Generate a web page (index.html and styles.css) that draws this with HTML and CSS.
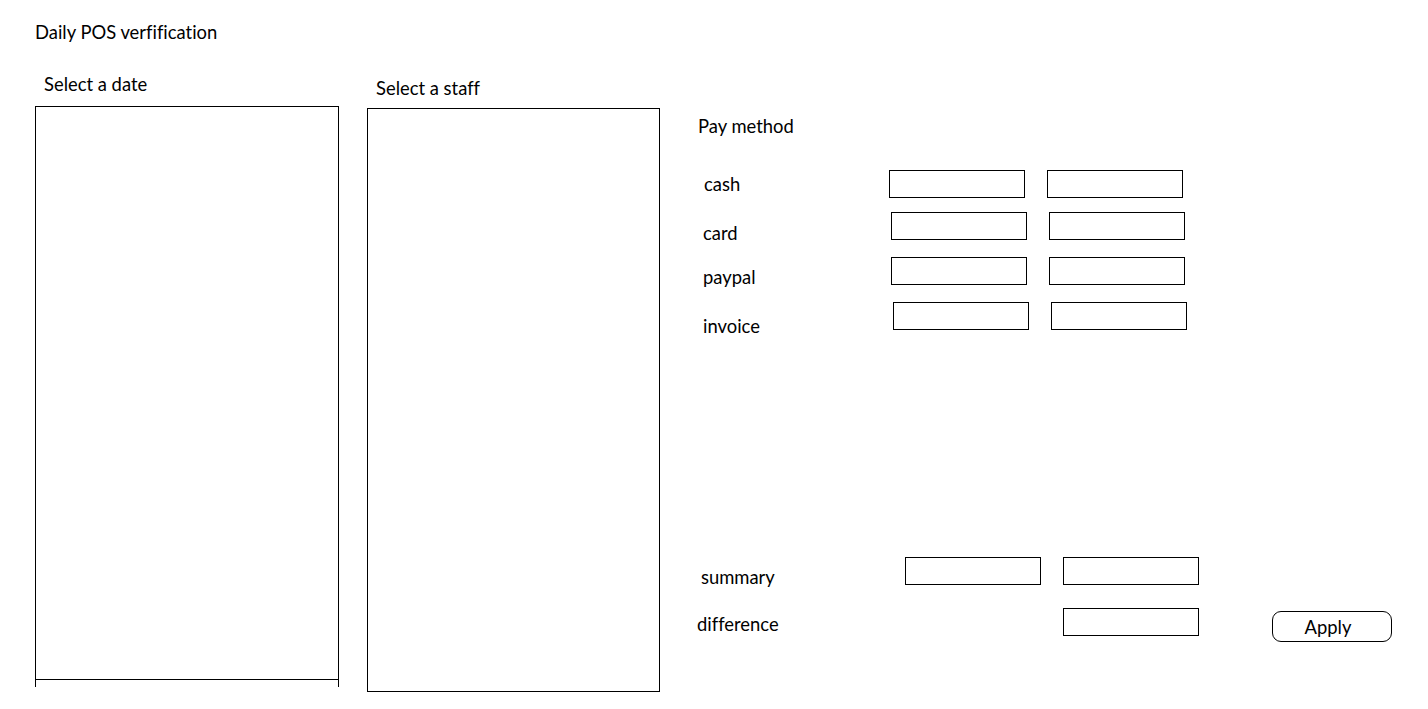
FILE: index.html
```html
<!DOCTYPE html>
<html lang="en">
<head>
    <meta charset="UTF-8">
    <title>Daily POS verfification</title>

    <link rel="stylesheet" href="styles.css">

</head>
<body>

<div class="pos">
    <h1 class="pos-title">Daily POS verfification</h1>

    <div class="pos-main">

        <div class="pos-col pos-col-date">
            <label class="pos-col-label">Select a date</label>
            <div class="pos-list pos-list-date" id="date-list"></div>
            <div class="pos-list-tail"></div>
        </div>

        <div class="pos-col pos-col-staff">
            <label class="pos-col-label">Select a staff</label>
            <div class="pos-list pos-list-staff" id="staff-list"></div>
        </div>

        <div class="pos-pay">
            <div class="pos-pay-title">Pay method</div>

            <div class="pay-row row-cash">
                <span class="pay-label">cash</span>
                <input class="pay-input" type="text"/>
                <input class="pay-input" type="text"/>
            </div>
            <div class="pay-row row-card">
                <span class="pay-label">card</span>
                <input class="pay-input" type="text"/>
                <input class="pay-input" type="text"/>
            </div>
            <div class="pay-row row-paypal">
                <span class="pay-label">paypal</span>
                <input class="pay-input" type="text"/>
                <input class="pay-input" type="text"/>
            </div>
            <div class="pay-row row-invoice">
                <span class="pay-label">invoice</span>
                <input class="pay-input" type="text"/>
                <input class="pay-input" type="text"/>
            </div>

            <div class="pay-row row-summary">
                <span class="pay-label">summary</span>
                <input class="pay-input" type="text"/>
                <input class="pay-input" type="text"/>
            </div>
            <div class="pay-row row-difference">
                <span class="pay-label">difference</span>
                <input class="pay-input" type="text"/>
                <button class="pay-apply" id="apply-button">Apply</button>
            </div>
        </div>

    </div>
</div>

</body>
</html>
```

FILE: styles.css
```css
html, body {
    padding: 0;
    margin: 0;
    height: 100%;
    background: white;
    color: black;
    font-family: Lato, "Open Sans", sans-serif;
    font-size: 18.4px;
    line-height: 22px;
    font-variant-ligatures: none;
}

.pos {
    height: 100%;
}

.pos .pos-title {
    margin: 0;
    padding: 21px 0 0 35px;
    font-size: 18.4px;
    font-weight: normal;
    line-height: 22px;
}

.pos .pos-main {
    display: flex;
    align-items: flex-start;
    margin-top: 27px;
}

/* the two list columns */
.pos .pos-col {
    display: flex;
    flex-direction: column;
}

.pos .pos-col-label {
    display: block;
    line-height: 22px;
}

.pos .pos-col-date {
    margin-left: 35px;
    width: 304px;
}

.pos .pos-col-date .pos-col-label {
    padding: 3px 0 0 9px;
    margin-bottom: 11px;
}

.pos .pos-col-staff {
    margin-left: 28px;
    width: 293px;
}

.pos .pos-col-staff .pos-col-label {
    padding: 7px 0 0 9px;
    margin-bottom: 9px;
}

.pos .pos-list {
    box-sizing: border-box;
    border: 1px solid black;
    background: white;
}

.pos .pos-list-date {
    height: 574px;
}

.pos .pos-list-tail {
    height: 7px;
    border-left: 1px solid black;
    border-right: 1px solid black;
}

.pos .pos-list-staff {
    height: 584px;
}

/* pay method block */
.pos .pos-pay {
    margin-left: 36px;
    padding-top: 45px;
}

.pos .pos-pay-title {
    padding-left: 2px;
}

.pos .pay-row {
    display: flex;
    align-items: flex-start;
    height: 28px;
}

.pos .pay-label {
    display: block;
    flex: none;
}

.pos .pay-input {
    box-sizing: border-box;
    width: 136px;
    height: 28px;
    margin: 0 22px 0 0;
    padding: 0 4px;
    border: 1px solid black;
    border-radius: 0;
    background: white;
    font: inherit;
    outline: none;
}

.pos .pay-apply {
    box-sizing: border-box;
    width: 120px;
    height: 31px;
    margin: 3px 0 0 51px;
    padding: 1px 8px 0 0;
    border: 1px solid black;
    border-radius: 9px;
    background: white;
    color: black;
    font: inherit;
    line-height: 28px;
    cursor: pointer;
}

.pos .row-cash { margin-top: 33px; padding-left: 8px; }
.pos .row-cash .pay-label { width: 185px; margin-top: 3px; }

.pos .row-card { margin-top: 14px; padding-left: 7px; }
.pos .row-card .pay-label { width: 188px; margin-top: 10px; }

.pos .row-paypal { margin-top: 17px; padding-left: 7px; }
.pos .row-paypal .pay-label { width: 188px; margin-top: 9px; }

.pos .row-invoice { margin-top: 17px; padding-left: 7px; }
.pos .row-invoice .pay-label { width: 190px; margin-top: 13px; }

.pos .row-summary { margin-top: 227px; padding-left: 5px; }
.pos .row-summary .pay-label { width: 204px; margin-top: 9px; }

.pos .row-difference { margin-top: 23px; padding-left: 1px; }
.pos .row-difference .pay-label { width: 366px; margin-top: 5px; }
```
